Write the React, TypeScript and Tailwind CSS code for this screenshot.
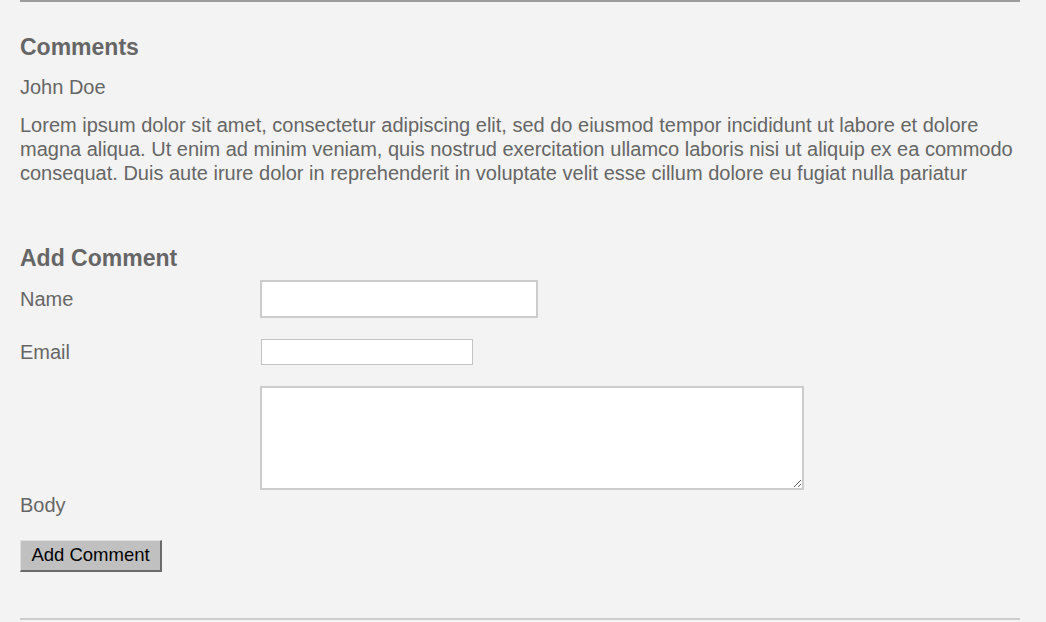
export default function App() {
  return (
    <div className="min-h-[622px] w-[1046px] bg-[#f3f3f3] font-['Liberation_Sans',Arial,sans-serif] text-[#666]">
      <div className="mx-[20px] w-[1000px]">
        {/* top rule */}
        <div className="h-[2px] bg-[#9b9b9b]" />

        {/* Comments list */}
        <section className="pt-[29px]">
          <h2 className="text-[23px] font-bold leading-[32px] text-[#666]">Comments</h2>
          <p className="mt-[12px] text-[20px] leading-[24px]">John Doe</p>
          <p className="mt-[14px] text-[20px] leading-[24px]">
            Lorem ipsum dolor sit amet, consectetur adipiscing elit, sed do eiusmod tempor incididunt ut labore et dolore
            <br />
            magna aliqua. Ut enim ad minim veniam, quis nostrud exercitation ullamco laboris nisi ut aliquip ex ea commodo
            <br />
            consequat. Duis aute irure dolor in reprehenderit in voluptate velit esse cillum dolore eu fugiat nulla pariatur
          </p>
        </section>

        {/* Add comment form */}
        <section className="mt-[57px]">
          <h2 className="text-[23px] font-bold leading-[32px] text-[#666]">Add Comment</h2>
          <form className="mt-[6px]">
            <div className="flex items-center">
              <label className="w-[240px] text-[20px] leading-[24px]">Name</label>
              <input
                type="text"
                className="h-[38px] w-[278px] border-2 border-[#cccccc] bg-white px-2 text-[16px] outline-none"
              />
            </div>
            <div className="mt-[21px] flex items-center">
              <label className="w-[241px] text-[20px] leading-[24px]">Email</label>
              <input
                type="email"
                className="h-[26px] w-[212px] border border-[#c4c4c4] bg-white px-1 text-[14px] outline-none"
              />
            </div>
            <div className="mt-[21px] flex">
              <div className="w-[240px]" />
              <textarea className="h-[104px] w-[544px] resize border-2 border-[#cccccc] bg-white p-1 text-[14px] outline-none" />
            </div>
            <label className="mt-[3px] block text-[20px] leading-[24px]">Body</label>
            <button
              type="button"
              className="mt-[23px] h-[32px] w-[142px] border-t border-l border-r-2 border-b-2 border-t-[#e0e0e0] border-l-[#e0e0e0] border-r-[#6a6a6a] border-b-[#6a6a6a] bg-[#c0c0c0] text-[18.5px] leading-none text-black"
            >
              Add Comment
            </button>
          </form>
        </section>

        {/* bottom rule */}
        <div className="mt-[46px] h-[2px] bg-[#cccccc]" />
      </div>
    </div>
  );
}
